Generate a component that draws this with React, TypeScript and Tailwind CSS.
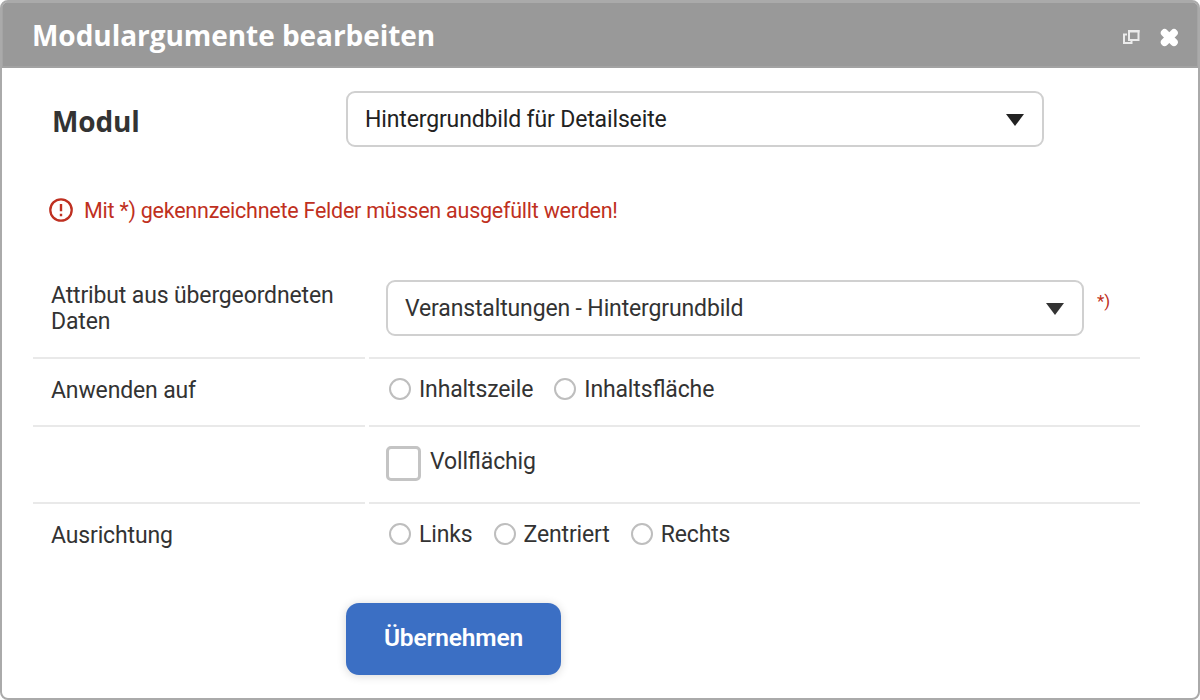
import React, { useState } from 'react';

interface SelectFieldProps {
    label: string;
    options: string[];
    className?: string;
}

const SelectField: React.FC<SelectFieldProps> = ({ label, options, className = '' }) => {
    const [value, setValue] = useState(options[0]);

    return (
        <div className={`grid items-center w-[698px] h-[56px] ${className}`}>
            <select
                aria-label={label}
                value={value}
                onChange={(e) => setValue(e.target.value)}
                className="col-start-1 row-start-1 appearance-none w-full h-full pl-[17px] pr-12 pt-[3px] bg-white border-2 border-[#d0d0d0] rounded-[9px] outline-none"
            >
                {options.map((option) => (
                    <option key={option}>{option}</option>
                ))}
            </select>
            <svg className="col-start-1 row-start-1 justify-self-end mr-5 mt-[2px] pointer-events-none" width="18" height="12" viewBox="0 0 18 12">
                <path d="M0 0h18L9 12z" fill="currentColor" />
            </svg>
        </div>
    );
};

interface RadioGroupProps {
    name: string;
    options: string[];
}

const RadioGroup: React.FC<RadioGroupProps> = ({ name, options }) => (
    <div className="flex gap-[21px] pl-5 pb-[3px]">
        {options.map((option) => (
            <label key={option} className="flex items-center">
                <input
                    type="radio"
                    name={name}
                    value={option}
                    className="appearance-none w-[22px] h-[22px] mr-2 mb-1 rounded-full border-2 border-[#bebebe] bg-white checked:border-[6px] checked:border-[#3b6fc4]"
                />
                {option}
            </label>
        ))}
    </div>
);

interface RowProps {
    label?: string;
    className: string;
    last?: boolean;
    children: React.ReactNode;
}

const Row: React.FC<RowProps> = ({ label, className, last, children }) => {
    const line = last ? '' : 'border-b-2 border-[#e9e9e9]';

    return (
        <div className={`flex gap-1 ${className}`}>
            <div className={`w-[332px] pl-[18px] flex items-center leading-[26px] ${line}`}>{label}</div>
            <div className={`w-[771px] flex items-center ${line}`}>{children}</div>
        </div>
    );
};

const App: React.FC = () => {
    return (
        <div className="w-[1200px] h-[700px] flex flex-col overflow-hidden bg-white border-2 border-[#aaaaaa] rounded-[8px] font-['Roboto',sans-serif] text-[23px] tracking-[-0.14px] [font-feature-settings:'liga'_1] text-[#333333]">
            <header className="h-[66px] shrink-0 flex items-center justify-between pl-[29px] pr-[18px] bg-[#999999] border-t border-x border-b-2 border-t-[#aaaaaa] border-x-[#a4a4a4] border-b-[#a2a2a2] text-white">
                <h1 className="pt-[1px] font-['Open_Sans',sans-serif] text-[28px] font-bold leading-none tracking-[-0.05px]">Modulargumente bearbeiten</h1>
                <div className="flex items-center gap-[20px] pt-[5px]">
                    <button type="button" aria-label="Maximieren">
                        <svg width="17" height="15" viewBox="0 0 17 15" fill="none" stroke="#ececec">
                            <path d="M6 1h9.5v9H6z" strokeWidth="2" />
                            <path d="M5 1.2h11.5" strokeWidth="2.4" />
                            <path d="M4 4.5H1V13h7.5v-2" strokeWidth="2" />
                        </svg>
                    </button>
                    <button type="button" aria-label="Schließen">
                        <svg width="19" height="19" viewBox="0 0 19 19" stroke="white" strokeWidth="7.6" strokeLinecap="round">
                            <path d="M4.6 4.9l9.4 9.4M14 4.9l-9.4 9.4" />
                        </svg>
                    </button>
                </div>
            </header>

            <main className="flex flex-col pl-[31px]">
                <div className="flex mt-[23px] text-[#222222]">
                    <h2 className="w-[313px] pl-[19px] pt-[9px] font-['Open_Sans',sans-serif] text-[28px] font-bold text-[#333333]">Modul</h2>
                    <SelectField label="Modul" options={['Hintergrundbild für Detailseite']} />
                </div>

                <div className="flex items-center mt-[48px] ml-4 h-[30px] text-[21.5px] tracking-[-0.24px] text-[#bf3021]">
                    <svg className="mr-[11px]" width="24" height="24" viewBox="0 0 24 24" fill="none" stroke="currentColor">
                        <circle cx="12" cy="12" r="10.7" strokeWidth="2.3" />
                        <path d="M12 6v7.2M12 15.8v2.4" strokeWidth="2.4" />
                    </svg>
                    <span className="pt-[2px]">Mit *) gekennzeichnete Felder müssen ausgefüllt werden!</span>
                </div>

                <div className="mt-[34px]">
                    <Row label="Attribut aus übergeordneten Daten" className="h-[100px] [&>div:first-child]:pt-[2px]">
                        <SelectField label="Attribut" options={['Veranstaltungen - Hintergrundbild']} className="ml-[17px]" />
                        <span className="ml-[13px] mb-[13px] text-[17px] text-[#bf3021]">*)</span>
                    </Row>
                    <Row label="Anwenden auf" className="h-[68px] [&>div:first-child]:pb-[2px]">
                        <RadioGroup name="anwenden" options={['Inhaltszeile', 'Inhaltsfläche']} />
                    </Row>
                    <Row className="h-[77px]">
                        <label className="flex items-center pl-[17px] pb-[2px]">
                            <input
                                type="checkbox"
                                className="appearance-none w-[35px] h-[35px] mr-[9px] border-[3px] border-[#c4c4c4] rounded-[5px] bg-white checked:bg-[#3b6fc4]"
                            />
                            <span className="pb-[3px]">Vollflächig</span>
                        </label>
                    </Row>
                    <Row label="Ausrichtung" className="h-[66px] [&>div:first-child]:pb-[2px]" last>
                        <RadioGroup name="ausrichtung" options={['Links', 'Zentriert', 'Rechts']} />
                    </Row>
                </div>

                <button
                    type="button"
                    className="w-[215px] h-[72px] mt-[33px] ml-[313px] pb-[1px] rounded-[13px] bg-[#3b6fc4] font-semibold text-[24.5px] text-white shadow-[0_1px_10px_rgba(0,0,0,0.16)]"
                >
                    Übernehmen
                </button>
            </main>
        </div>
    );
};

export default App;
